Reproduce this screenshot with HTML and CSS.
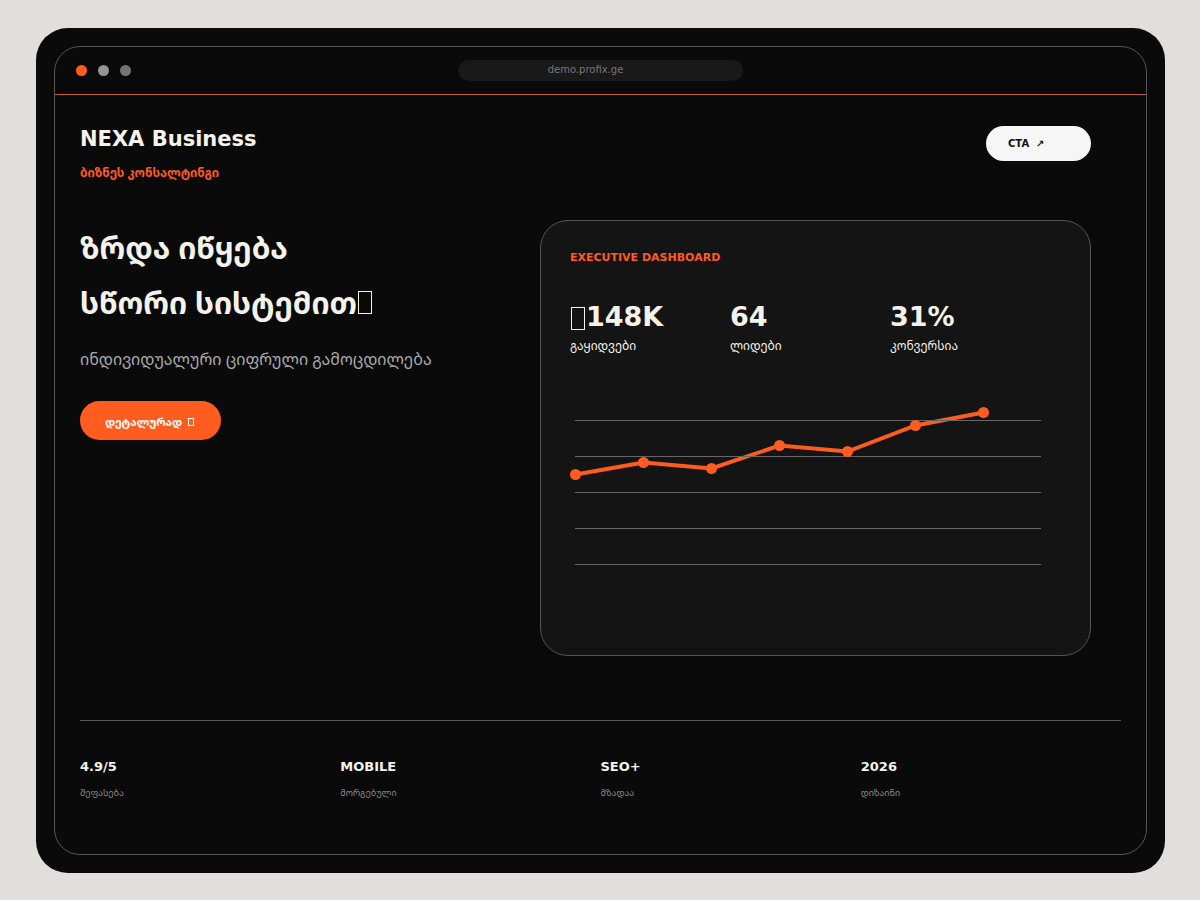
FILE: index.html
```html
<!DOCTYPE html>
<html lang="ka">
<head>
    <meta charset="UTF-8">
    <meta name="viewport" content="width=device-width, initial-scale=1">
    <title>NEXA Business</title>
    <link rel="stylesheet" href="styles.css">
</head>
<body>
    <div class="device">
        <div class="screen">
            <div class="browser-bar">
                <div class="dots">
                    <span class="dot dot-orange"></span>
                    <span class="dot dot-light"></span>
                    <span class="dot dot-dark"></span>
                </div>
                <div class="address">demo.profix.ge</div>
            </div>

            <div class="page">
                <header class="header">
                    <div>
                        <div class="brand">NEXA Business</div>
                        <div class="tagline">ბიზნეს კონსალტინგი</div>
                    </div>
                    <button class="cta">CTA&nbsp; ↗</button>
                </header>

                <main class="main">
                    <section class="hero">
                        <h1>ზრდა იწყება<br>სწორი სისტემით<span class="box"></span></h1>
                        <p>ინდივიდუალური ციფრული გამოცდილება</p>
                        <button class="details">დეტალურად <span class="box"></span></button>
                    </section>

                    <section class="card">
                        <h2>EXECUTIVE DASHBOARD</h2>
                        <div class="stats">
                            <div>
                                <div class="stat-value"><span class="box"></span>148K</div>
                                <div class="stat-label">გაყიდვები</div>
                            </div>
                            <div>
                                <div class="stat-value">64</div>
                                <div class="stat-label">ლიდები</div>
                            </div>
                            <div>
                                <div class="stat-value">31%</div>
                                <div class="stat-label">კონვერსია</div>
                            </div>
                        </div>
                        <svg class="chart" viewBox="0 0 491 180">
                            <polyline class="chart-line" points="5.5,74.5 73.5,62.5 141.5,68.5 209.5,45.5 277.5,51.5 345.5,25.5 413.5,12.5"/>
                            <path class="chart-grid" d="M5 20.5H471M5 56.5H471M5 92.5H471M5 128.5H471M5 164.5H471"/>
                            <g class="chart-points">
                                <circle cx="5.5" cy="74.5" r="5.5"/>
                                <circle cx="73.5" cy="62.5" r="5.5"/>
                                <circle cx="141.5" cy="68.5" r="5.5"/>
                                <circle cx="209.5" cy="45.5" r="5.5"/>
                                <circle cx="277.5" cy="51.5" r="5.5"/>
                                <circle cx="345.5" cy="25.5" r="5.5"/>
                                <circle cx="413.5" cy="12.5" r="5.5"/>
                            </g>
                        </svg>
                    </section>
                </main>

                <footer class="footer">
                    <div>
                        <div class="fact-value">4.9/5</div>
                        <div class="fact-label">შეფასება</div>
                    </div>
                    <div>
                        <div class="fact-value">MOBILE</div>
                        <div class="fact-label">მორგებული</div>
                    </div>
                    <div>
                        <div class="fact-value">SEO+</div>
                        <div class="fact-label">მზადაა</div>
                    </div>
                    <div>
                        <div class="fact-value">2026</div>
                        <div class="fact-label">დიზაინი</div>
                    </div>
                </footer>
            </div>
        </div>
    </div>
</body>
</html>
```
FILE: styles.css
```css
* {
    box-sizing: border-box;
}

body {
    margin: 0;
    min-height: 100vh;
    display: flex;
    padding: 28px 35px 27px 36px;
    background: #e0dfdb;
    color: #f5f2ea;
    font-family: "DejaVu Sans", sans-serif;
}

h1, h2, p {
    margin: 0;
}

button {
    border: none;
    font-family: inherit;
    font-weight: bold;
    cursor: pointer;
}

.tagline, .hero h1, .hero p, .details, .stat-label, .fact-label {
    font-family: "Noto Sans Georgian", "DejaVu Sans", sans-serif;
}

.device {
    flex: 1;
    display: flex;
    padding: 18px;
    border-radius: 32px;
    background: #0a0a0a;
}

.screen {
    flex: 1;
    border: 1px solid #555;
    border-radius: 26px;
}

/* browser bar */
.browser-bar {
    display: grid;
    grid-template-columns: 1fr 285px 1fr;
    align-items: center;
    height: 48px;
    padding: 0 21px;
    border-bottom: 1px solid #c4603c;
}

.dots {
    display: flex;
    gap: 11px;
}

.dot {
    width: 11px;
    height: 11px;
    border-radius: 50%;
}

.dot-orange {
    background: #ff5c1f;
}

.dot-light {
    background: #949494;
}

.dot-dark {
    background: #747474;
}

.address {
    padding: 0 30px 1px 0;
    border-radius: 11px;
    background: #191919;
    color: #777;
    font-size: 10px;
    line-height: 20px;
    text-align: center;
}

.page {
    padding: 31px 25px;
}

.header {
    display: flex;
    justify-content: space-between;
    align-items: flex-start;
    padding-right: 30px;
}

.brand {
    font-size: 21px;
    font-weight: bold;
    line-height: 26px;
}

.tagline {
    margin-top: 10px;
    color: #ff5c1f;
    font-size: 12px;
    font-weight: bold;
    line-height: 22px;
}

.cta {
    width: 105px;
    height: 35px;
    padding: 0 22px;
    border-radius: 18px;
    background: #f6f6f6;
    color: #111;
    font-size: 10px;
    text-align: left;
}

.main {
    display: grid;
    grid-template-columns: 460px 1fr;
    margin-top: 36px;
    padding-right: 30px;
}

.hero h1 {
    font-size: 30px;
    line-height: 55px;
}

.hero p {
    margin-top: 15px;
    color: #aaa;
    font-size: 16px;
    line-height: 28px;
}

.details {
    width: 141px;
    height: 39px;
    margin-top: 28px;
    padding: 1px 25px 0;
    border-radius: 20px;
    background: #ff5c1f;
    color: #fff;
    font-size: 11px;
    text-align: left;
    white-space: nowrap;
}

/* hollow box glyph */
.box {
    display: inline-block;
    width: 14px;
    height: 23px;
    margin: 0 1px;
    border: 1px solid currentColor;
}

.stat-value .box {
    vertical-align: -4px;
}

.details .box {
    width: 6px;
    height: 8px;
    margin-left: 3px;
}

.card {
    min-height: 436px;
    padding: 26px 29px;
    border: 1px solid #555;
    border-radius: 28px;
    background: #141414;
}

.card h2 {
    color: #ff5c1f;
    font-size: 11px;
    line-height: 22px;
}

.stats {
    display: grid;
    grid-template-columns: repeat(3, 160px);
    margin-top: 31px;
}

.stat-value {
    height: 34px;
    font-size: 27px;
    font-weight: bold;
    line-height: 34px;
}

.stat-label {
    margin-top: 1px;
    font-size: 12px;
    line-height: 22px;
}

.chart {
    display: block;
    width: 100%;
    margin-top: 43px;
}

.chart-line {
    fill: none;
    stroke: #ff5c1f;
    stroke-width: 4;
}

.chart-grid {
    stroke: #666;
    stroke-width: 1;
}

.chart-points {
    fill: #ff5c1f;
}

/* facts */
.footer {
    display: grid;
    grid-template-columns: repeat(4, 1fr);
    margin-top: 64px;
    padding-top: 36px;
    border-top: 1px solid #555;
}

.fact-value {
    font-size: 13px;
    font-weight: bold;
    line-height: 20px;
}

.fact-label {
    margin-top: 6px;
    color: #888;
    font-size: 9px;
    line-height: 20px;
}
```
